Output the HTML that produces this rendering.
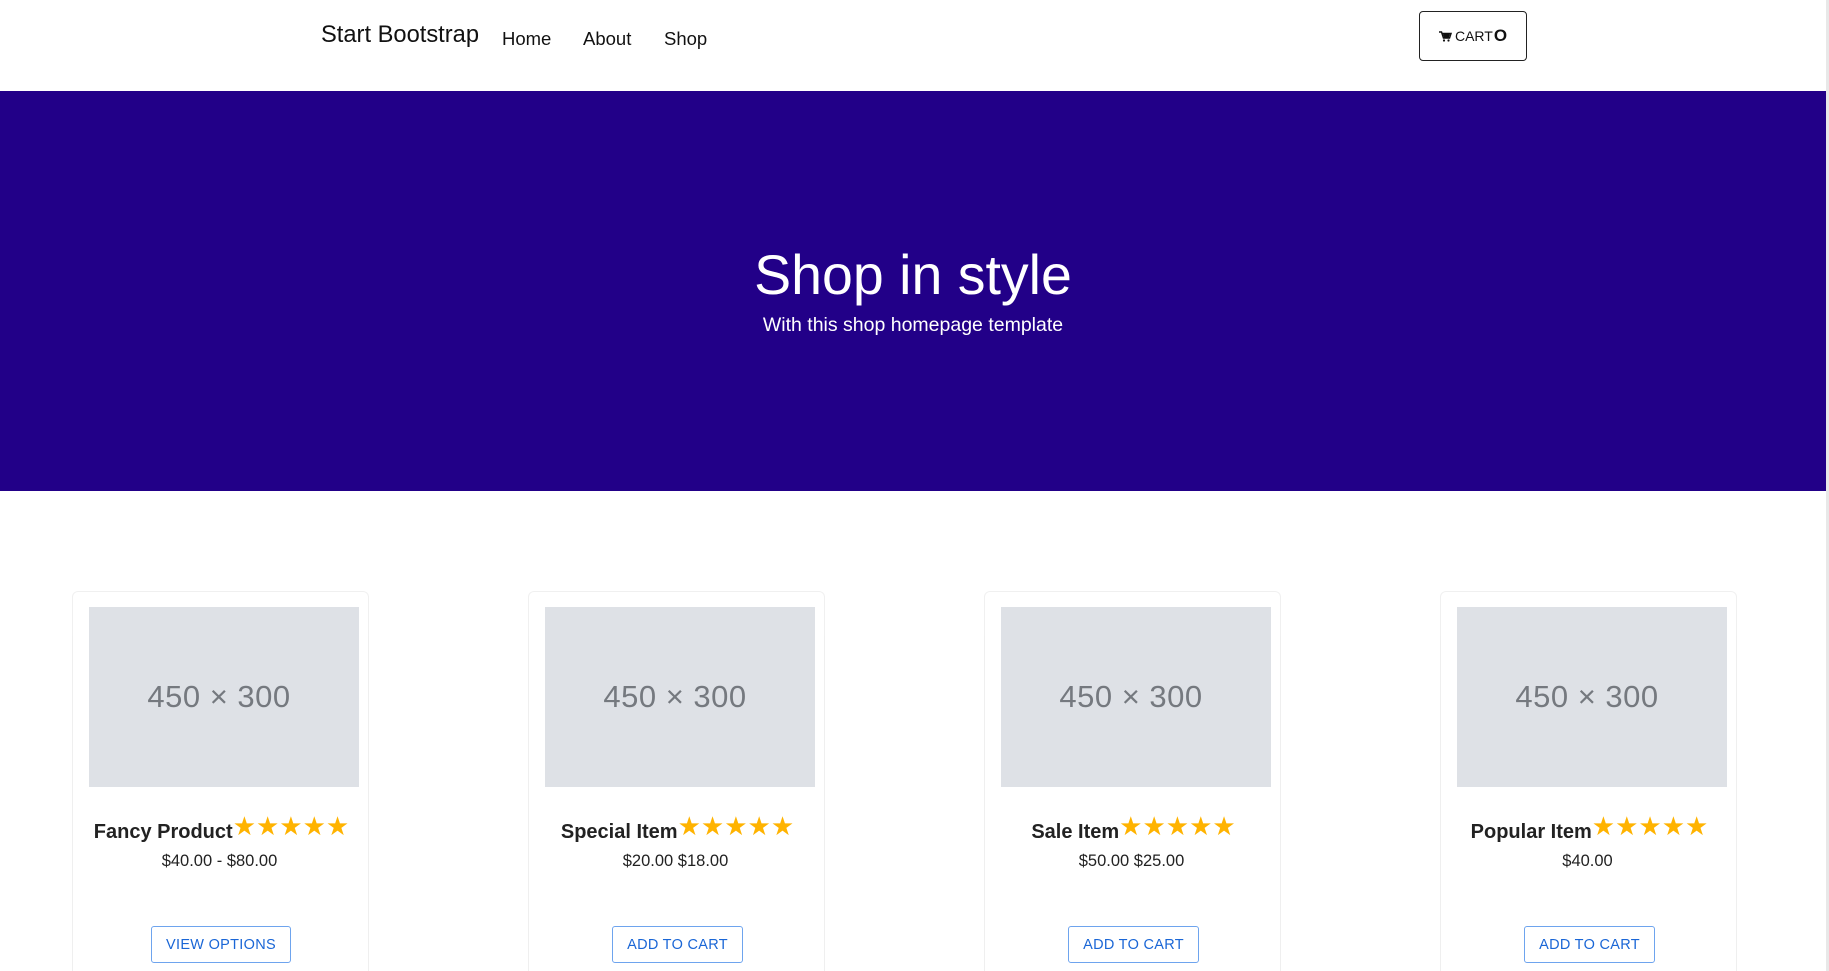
<!DOCTYPE html>
<html><head><meta charset="utf-8"><style>
*{box-sizing:border-box;margin:0;padding:0}
html,body{width:1829px;height:971px;overflow:hidden;background:#fff;font-family:"Liberation Sans",Arial,sans-serif;color:#212529;position:relative}
.abs{position:absolute}
.brand{left:321px;top:20px;font-size:23.7px;color:#111;line-height:30px}
.nav{top:27px;font-size:18.5px;color:#111;line-height:24px}
.cart{left:1419px;top:11px;width:108px;height:50px;border:1.5px solid #222;border-radius:4px;font-size:14px;display:flex;align-items:center;justify-content:center;color:#111}
.cart b{font-size:17px;font-weight:900;margin-left:1px}
.hero{left:0;top:91px;width:1826px;height:400px;background:#220088;color:#fff;text-align:center}
.hero h1{position:absolute;top:152px;width:100%;font-size:55.5px;font-weight:400;line-height:64px}
.hero p{position:absolute;top:222px;width:100%;font-size:19.5px;line-height:24px}
.sb{left:1826px;top:0;width:3px;height:971px;background:#e8e8e8}
.card{top:591px;width:297px;height:380px;border:1px solid rgba(0,0,0,.06);border-bottom:none;border-radius:6px 6px 0 0}
.img{position:absolute;left:16px;top:15px;width:270px;height:180px;background:#dee1e6;color:#75797f;font-size:31px;display:flex;align-items:center;justify-content:center;padding-right:10px;letter-spacing:.5px}
.title{position:absolute;top:219px;left:0;width:297px;text-align:center;font-size:20px;font-weight:700;color:#222;white-space:nowrap}
.title span{color:#ffb300;font-size:26px;font-weight:400;letter-spacing:0px;vertical-align:3px}
.price{position:absolute;top:260px;left:0;width:297px;text-align:center;font-size:16.5px;color:#222;padding-right:4px}
.btn{position:absolute;top:334px;height:37px;border:1.5px solid #6ea4ee;border-radius:3px;color:#1a66d6;font-size:14.5px;display:flex;align-items:center;justify-content:center;letter-spacing:.3px}
</style></head><body>
<div class="abs brand">Start Bootstrap</div>
<div class="abs nav" style="left:502px">Home</div>
<div class="abs nav" style="left:583px">About</div>
<div class="abs nav" style="left:664px">Shop</div>
<div class="abs cart"><svg width="13" height="11" viewBox="0 0 13 11" style="margin-right:3px"><path d="M0 1h2.5l2 6h6l1.5-4.5H3.5" fill="none" stroke="#111" stroke-width="1.5"/><path d="M4 3h7l-1.2 3.5H5z" fill="#111"/><circle cx="5" cy="9.5" r="1.1" fill="#111"/><circle cx="9.5" cy="9.5" r="1.1" fill="#111"/></svg>CART<b>O</b></div>
<div class="abs hero"><h1>Shop in style</h1><p>With this shop homepage template</p></div>
<div class="abs sb"></div>

<div class="abs card" style="left:72px"><div class="img">450 × 300</div><div class="title">Fancy Product<span>★★★★★</span></div><div class="price">$40.00 - $80.00</div><div class="btn" style="left:78px;width:140px">VIEW OPTIONS</div></div>
<div class="abs card" style="left:528px"><div class="img">450 × 300</div><div class="title">Special Item<span>★★★★★</span></div><div class="price">$20.00 $18.00</div><div class="btn" style="left:83px;width:131px">ADD TO CART</div></div>
<div class="abs card" style="left:984px"><div class="img">450 × 300</div><div class="title">Sale Item<span>★★★★★</span></div><div class="price">$50.00 $25.00</div><div class="btn" style="left:83px;width:131px">ADD TO CART</div></div>
<div class="abs card" style="left:1440px"><div class="img">450 × 300</div><div class="title">Popular Item<span>★★★★★</span></div><div class="price">$40.00</div><div class="btn" style="left:83px;width:131px">ADD TO CART</div></div>
</body></html>
